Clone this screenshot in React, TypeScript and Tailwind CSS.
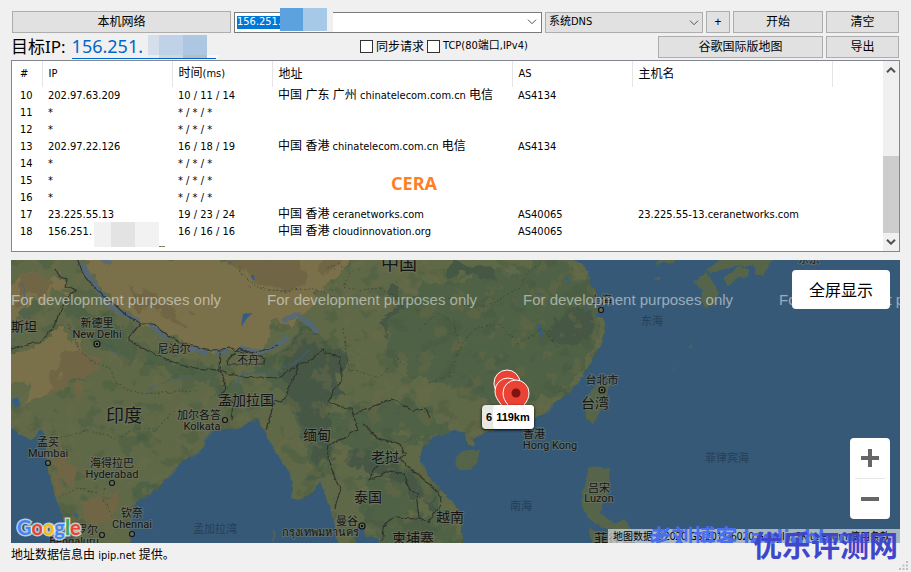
const CELL = 'border-none p-0 pl-[6px] text-left font-normal whitespace-nowrap';
const BTN = 'h-[22px] shrink-0 border border-[#adadad] bg-[#e1e1e1] text-center text-xs leading-5 hover:border-[#0078d7]';
const SMALL = "font-['DejaVu_Sans_Condensed','Noto_Sans_CJK_SC',sans-serif] text-[11px]";

type Hop = { n: number; ip: string; time: string; place?: string; host?: string; isp?: string; as?: string; name?: string };

const hops: Hop[] = [
  { n: 10, ip: '202.97.63.209', time: '10 / 11 / 14', place: '中国 广东 广州', host: 'chinatelecom.com.cn', isp: '电信', as: 'AS4134' },
  { n: 11, ip: '*', time: '* / * / *' },
  { n: 12, ip: '*', time: '* / * / *' },
  { n: 13, ip: '202.97.22.126', time: '16 / 18 / 19', place: '中国 香港', host: 'chinatelecom.com.cn', isp: '电信', as: 'AS4134' },
  { n: 14, ip: '*', time: '* / * / *' },
  { n: 15, ip: '*', time: '* / * / *' },
  { n: 16, ip: '*', time: '* / * / *' },
  { n: 17, ip: '23.225.55.13', time: '19 / 23 / 24', place: '中国 香港', host: 'ceranetworks.com', as: 'AS40065', name: '23.225.55-13.ceranetworks.com' },
  { n: 18, ip: '156.251.', time: '16 / 16 / 16', place: '中国 香港', host: 'cloudinnovation.org', as: 'AS40065' },
];

type Label = { x: number; y: number; t: string; s: number; sea?: boolean };

const labels: Label[] = [
  { x: 399, y: 270, t: '中国', s: 18 },
  { x: 24, y: 331, t: '斯坦', s: 13 },
  { x: 97, y: 327, t: '新德里', s: 11 },
  { x: 97, y: 338, t: 'New Delhi', s: 11 },
  { x: 174, y: 353, t: '尼泊尔', s: 11 },
  { x: 248, y: 364, t: '不丹', s: 11 },
  { x: 246, y: 405, t: '孟加拉国', s: 14 },
  { x: 124, y: 422, t: '印度', s: 18 },
  { x: 199, y: 419, t: '加尔各答', s: 11 },
  { x: 202, y: 430, t: 'Kolkata', s: 11 },
  { x: 48, y: 446, t: '孟买', s: 11 },
  { x: 48, y: 457, t: 'Mumbai', s: 11 },
  { x: 112, y: 467, t: '海得拉巴', s: 11 },
  { x: 112, y: 478, t: 'Hyderabad', s: 11 },
  { x: 132, y: 517, t: '钦奈', s: 11 },
  { x: 132, y: 528, t: 'Chennai', s: 11 },
  { x: 76, y: 534, t: '班加罗尔', s: 11 },
  { x: 74, y: 545, t: 'Bengaluru', s: 11 },
  { x: 317, y: 440, t: '缅甸', s: 14 },
  { x: 385, y: 462, t: '老挝', s: 14 },
  { x: 368, y: 502, t: '泰国', s: 14 },
  { x: 450, y: 522, t: '越南', s: 14 },
  { x: 413, y: 543, t: '柬埔寨', s: 14 },
  { x: 347, y: 525, t: '曼谷', s: 11 },
  { x: 320, y: 536, t: 'กรุงเทพมหานคร', s: 11 },
  { x: 534, y: 438, t: '香港', s: 11 },
  { x: 550, y: 449, t: 'Hong Kong', s: 11 },
  { x: 602, y: 384, t: '台北市', s: 11 },
  { x: 595, y: 408, t: '台湾', s: 14 },
  { x: 601, y: 304, t: '上海', s: 11 },
  { x: 599, y: 492, t: '吕宋', s: 11 },
  { x: 599, y: 502, t: 'Luzon', s: 11 },
  { x: 615, y: 544, t: '菲律宾', s: 14 },
  { x: 809, y: 263, t: '东京', s: 11 },
  { x: 652, y: 325, t: '东海', s: 11, sea: true },
  { x: 521, y: 510, t: '南海', s: 11, sea: true },
  { x: 727, y: 462, t: '菲律宾海', s: 11, sea: true },
  { x: 215, y: 533, t: '孟加拉湾', s: 11, sea: true },
];

const cities = [
  [48, 463], [112, 483], [132, 534], [102, 535], [225, 420], [601, 310],
];
const capitals = [
  [97, 344], [362, 526], [602, 390],
];

const MAINLAND =
  'M0 250H560L574 260 587 268 590 282 598 293 593 302 602 310 594 315 604 320 607 327 605 338 602 348 597 355 590 368 580 383 567 397 553 407 547 416 533 420 530 425 513 428 497 431 480 437 475 441 476 447 470 447 468 440 467 434 457 432 443 435 433 440 425 448 422 460 428 475 443 492 457 507 463 520 463 555H383L380 538 367 538 365 528 358 528 358 555H340L337 527 332 510 322 482 315 493 300 502 293 500 295 490 292 477 283 463 273 447 267 433 258 420 250 425 240 430 213 432 207 440 203 452 187 460 177 470 167 480 155 493 140 500 132 510 133 527 130 555H84L70 533 63 517 58 500 50 473 47 443 43 431 33 441 24 438 11 428 0 420Z';

const ISLANDS = [
  'M457 460L463 453 482 451 480 460 473 472 463 472 456 467Z',
  'M612 385L608 400 600 415 594 427 588 418 586 408 590 395 600 386Z',
  'M590 468L611 470 612 490 606 503 602 515 615 525 627 521 634 532 628 534 610 530 597 525 590 520 584 508 583 495 588 485Z',
  'M590 530L600 533 612 550H596Z',
  'M708 272L722 260 735 255H777L770 268 765 277 758 277 755 267 735 268 722 272 712 275Z',
  'M725 280L740 268 751 270 750 278 738 280 730 288Z',
  'M695 283L708 274 718 288 720 295 715 307 707 310 703 302 705 292 697 288Z',
  'M656 266L665 258H685L675 264Z',
  'M655 281L661 278 661 282Z',
  'M690 350L694 346 693 350ZM673 372L679 367 675 372ZM275 531L277 530 276 543H274Z',
];

const TAN = [
  'M84 255H352L340 272 322 292 304 315 283 325 270 345 253 350 213 352 193 348 177 342 160 327 143 325 117 308 103 295 90 275Z',
  'M0 360L43 345 53 333 70 333 80 352 102 362 90 378 67 388 33 398 28 404 26 380 0 382Z',
  'M0 290L20 278 37 272 63 276 68 292 33 298 13 322 0 322Z',
];

const BROWN = [
  'M228 255H300L304 285 285 292 260 287 243 275 235 270Z',
  'M64 352L80 352 102 362 90 378 67 388 40 396 55 380Z',
  'M20 280L37 272 60 277 60 287 35 294 18 305Z',
  'M58 440L66 455 70 475 64 490 70 496 62 498 57 480Z',
  'M85 498L100 495 115 490 120 500 108 525 96 530 85 520Z',
  'M120 285L150 292 175 310 190 330 165 318 135 303Z',
  'M320 255H345L335 270 322 268Z',
];

const DARK = [
  'M391 310L420 285 470 280 505 267 570 262 590 285 600 330 590 360 562 393 530 403 490 400 452 388 410 372 388 355Z',
  'M302 325L318 332 330 345 343 352 342 400 330 398 333 408 348 412 365 405 398 400 430 412 450 432 425 445 400 430 385 455 400 462 432 490 445 510 430 510 400 480 370 460 350 440 330 450 322 480 310 470 300 430 283 395 270 382 256 370 283 350Z',
  'M66 290L80 300 105 320 130 340 160 352 190 362 220 370 232 382 245 400 225 410 210 385 170 370 130 360 95 345 66 320Z',
  'M370 478L400 478 415 500 418 520 445 505 460 520 462 545H385L378 530 362 520 350 500Z',
  'M137 405L150 435 140 450 135 430Z',
  'M130 487L155 483 165 478 158 492 135 498Z',
  'M62 505L72 512 72 528 66 518Z',
];

const DEEP = [
  'M302 328L315 332 328 347 342 355 342 398 330 396 332 410 322 428 333 445 322 470 313 455 306 430 288 398 282 372 290 350Z',
  'M560 315L585 312 596 325 580 340 555 342 545 330Z',
  'M448 265L485 266 500 280 470 277 450 275Z',
  'M345 455L360 445 370 460 385 460 410 475 430 495 440 515 425 505 390 475 350 470Z',
  'M383 322L390 300 398 285 405 295 392 318 386 335Z',
];

const GLACIER =
  'M83 266L92 280 104 297 112 307 122 314 140 322M105 260L112 266M150 324L170 340M190 350L208 354M215 354L230 353M240 350L262 354 283 345 290 338M285 322L300 316 320 334';

const BORDERS =
  'M11 352L35 344 42 344 58 324 62 312 68 300 78 292 67 288 69 281 62 279 57 270M79 260L84 274 92 284 105 298 116 306 128 317 142 325 155 325 172 339 189 347 213 352 232 350 245 354 262 353 280 347M142 325L131 338 131 342 150 353 175 364 196 370 221 372 222 354M229 362L240 350 267 360 266 366 230 366ZM222 372L228 390 221 398 235 404 233 422M222 372L240 378 280 380 300 366 294 382 283 405 276 403 268 432M302 366L315 360 323 350 328 355 342 358 343 374 343 383 334 393 331 403 348 410 353 410 355 420 360 430 347 438 330 447 328 460 335 475 342 492 337 510M353 415L371 410 380 404 394 401 405 407 415 412 428 410 432 420M365 425L380 440 402 446 406 458 400 460 424 480 438 492 444 505M402 460L380 465 370 480 376 480 392 472 405 476 411 490 418 495 421 520M383 543L386 525 397 519 420 520 430 523 443 507';

const PROVINCES =
  'M240 260L242 275 262 290 285 293 312 290 340 300M328 270L340 265 352 275 345 288 360 292 382 290M382 290L410 305 450 300 480 310 495 305 520 290 530 275 545 262M345 330L350 370 380 380 400 360 410 370M462 350L475 330 500 325 520 345 545 330 560 350M420 332L440 315 455 325 462 350 450 378 430 385M70 325L80 350 92 362 110 370 118 385 140 395 200 392M62 440L90 432 120 440 137 430 160 430 175 412M100 460L108 480 105 500 115 520M60 500L80 490 100 495';

const RIVERS =
  'M13 345L25 325 28 305 24 285M105 330L112 350 122 358M238 390L242 376 275 374 300 362 311 352M241 400L248 412M150 392L175 380 200 378';

const LAKES =
  'M14 403L18 399 23 406 17 409ZM245 316L254 315 250 319 243 328ZM190 312L196 314 195 316ZM252 277L257 277 257 282ZM539 328L543 326 545 338 540 336ZM535 295L548 294 543 297ZM567 278L571 280 570 286ZM76 515L80 517 77 519ZM230 264L234 264 232 266ZM585 306L591 308 588 311Z';

function Mosaic({ className, tones }: { className: string; tones: string[] }) {
  return (
    <span aria-hidden="true" className={`absolute flex ${className}`}>
      {tones.map((tone, i) => (
        <span key={i} className={tone} />
      ))}
    </span>
  );
}

function Chevron({ className }: { className: string }) {
  return (
    <svg viewBox="0 0 10 6" className={`h-[6px] w-[10px] ${className}`} fill="none" stroke="currentColor">
      <path d="M1 .7L5 4.7 9 .7" />
    </svg>
  );
}

function Pin({ x, y }: { x: number; y: number }) {
  return (
    <g transform={`translate(${x} ${y})`}>
      <path
        d="M0 28C-1 22-4 17-8 12C-11 8-13 5-13 0A13 13 0 0 1 13 0C13 5 11 8 8 12C4 17 1 22 0 28Z"
        fill="#ea4335"
        stroke="#fff"
      />
      <circle r="4.5" fill="#811411" />
    </g>
  );
}

function Terrain() {
  return (
    <svg viewBox="11 260 889 283" preserveAspectRatio="xMinYMin slice" className="absolute inset-0 h-full w-full">
      <defs>
        <filter id="rough" x="-5%" y="-5%" width="110%" height="110%">
          <feTurbulence type="fractalNoise" baseFrequency=".12" numOctaves="3" seed="4" />
          <feDisplacementMap in="SourceGraphic" scale="7" xChannelSelector="R" yChannelSelector="G" colorInterpolationFilters="sRGB" />
        </filter>
        <filter id="ragged" x="-5%" y="-5%" width="110%" height="110%" colorInterpolationFilters="sRGB">
          <feTurbulence type="fractalNoise" baseFrequency=".06" numOctaves="4" seed="9" />
          <feDisplacementMap in="SourceGraphic" scale="30" xChannelSelector="R" yChannelSelector="G" />
        </filter>
        <filter id="patches" x="0" y="0" width="100%" height="100%" colorInterpolationFilters="sRGB">
          <feTurbulence type="fractalNoise" baseFrequency=".05 .06" numOctaves="4" seed="21" />
          <feColorMatrix values="0 0 0 0 .28  0 0 0 0 .35  0 0 0 0 .26  14 0 0 0 -8" />
        </filter>
        <filter id="spots" x="0" y="0" width="100%" height="100%" colorInterpolationFilters="sRGB">
          <feTurbulence type="fractalNoise" baseFrequency=".06" numOctaves="4" seed="33" />
          <feColorMatrix values="0 0 0 0 .42  0 0 0 0 .42  0 0 0 0 .28  0 14 0 0 -8.2" />
        </filter>
        <clipPath id="land">
          <path d={MAINLAND} />
        </clipPath>
      </defs>
      <rect x="0" y="250" width="910" height="300" fill="#355977" />
      <g filter="url(#rough)" fill="#5f6948">
        <path d={MAINLAND} />
        {ISLANDS.map((d) => (
          <path key={d} d={d} fill="#56654a" />
        ))}
      </g>
      <g clipPath="url(#land)">
        <g filter="url(#ragged)">
          {DARK.map((d) => <path key={d} d={d} fill="#4f6246" />)}
          {DEEP.map((d) => <path key={d} d={d} fill="#465845" />)}
        </g>
        <rect x="11" y="260" width="620" height="283" filter="url(#patches)" opacity=".35" />
        <rect x="11" y="260" width="620" height="283" filter="url(#spots)" opacity=".45" />
        <g filter="url(#ragged)">
          {TAN.map((d) => <path key={d} d={d} fill="#7a7049" />)}
          {BROWN.map((d) => <path key={d} d={d} fill="#706645" />)}
        </g>
      </g>
      <g fill="none" filter="url(#rough)">
        <path d={GLACIER} stroke="#52697c" strokeWidth="5" strokeOpacity=".85" />
        <path d={RIVERS} stroke="#40627c" />
        <path d={LAKES} fill="#355d84" />
        <path d={PROVINCES} stroke="#3f4637" strokeWidth=".8" strokeDasharray="2 2" />
        <path d={BORDERS} stroke="#30352f" strokeWidth="1.2" />
      </g>
      {cities.map(([x, y]) => (
        <circle key={x} cx={x} cy={y} r="2.5" fill="#666d5c" stroke="#161616" strokeWidth="1.2" />
      ))}
      {capitals.map(([x, y]) => (
        <g key={x} stroke="#101010">
          <circle cx={x} cy={y} r="3" fill="#6f745f" strokeWidth="1.2" />
          <circle cx={x} cy={y} r="1.3" fill="#101010" stroke="none" />
        </g>
      ))}
      <g textAnchor="middle" className="font-[Roboto,'Noto_Sans_CJK_SC',sans-serif] [paint-order:stroke]">
        {labels.map((l) => (
          <text
            key={l.t}
            x={l.x}
            y={l.y}
            fontSize={l.s}
            fill={l.sea ? '#263f57' : '#151515'}
            stroke={l.sea ? 'none' : '#73796a'}
            strokeOpacity=".6"
            strokeWidth="2"
          >
            {l.t}
          </text>
        ))}
      </g>
      <g fill="#fff" fillOpacity=".5" fontSize="15" className="font-['Liberation_Sans',sans-serif]">
        {[11, 267, 523, 779].map((x) => (
          <text key={x} x={x} y="305">For development purposes only</text>
        ))}
      </g>
      <Pin x={507} y={383} />
      <Pin x={508} y={391} />
      <Pin x={516} y={393} />
    </svg>
  );
}

function TraceTable() {
  return (
    <div className={`relative flex h-48 border border-[#828790] bg-white ${SMALL}`}>
      <table className="h-0 w-full table-fixed border-collapse">
        <colgroup>
          <col className="w-[30px]" />
          <col className="w-[130px]" />
          <col className="w-[100px]" />
          <col className="w-[240px]" />
          <col className="w-[120px]" />
          <col className="w-[200px]" />
          <col />
        </colgroup>
        <thead>
          <tr className="h-[26px]">
            <th className="border-r border-[#e5e5e5] p-0 pl-2 text-left font-normal">#</th>
            <th className="border-r border-[#e5e5e5] p-0 pl-[6px] text-left font-normal">IP</th>
            <th className="border-r border-[#e5e5e5] p-0 pl-[6px] text-left font-normal">
              <span className="text-xs">时间</span>(ms)
            </th>
            <th className="border-r border-[#e5e5e5] p-0 pl-[6px] text-left text-xs font-normal">地址</th>
            <th className="border-r border-[#e5e5e5] p-0 pl-[6px] text-left font-normal">AS</th>
            <th className="border-r border-[#e5e5e5] p-0 pl-[6px] text-left text-xs font-normal">主机名</th>
            <th />
          </tr>
        </thead>
        <tbody>
          {hops.map((hop) => (
            <tr key={hop.n} className="h-[17px] leading-[17px]">
              <td className="p-0 pl-2">{hop.n}</td>
              <td className={CELL}>{hop.ip}</td>
              <td className={CELL}>{hop.time}</td>
              <td className={CELL}>
                <span className="text-xs leading-[17px]">{hop.place}</span> {hop.host}{' '}
                <span className="text-xs leading-[17px]">{hop.isp}</span>
              </td>
              <td className={CELL}>{hop.as}</td>
              <td className={CELL}>{hop.name}</td>
              <td />
            </tr>
          ))}
        </tbody>
      </table>
      <div className="flex w-4 shrink-0 flex-col items-center bg-[#f0f0f0]">
        <Chevron className="my-[6px] shrink-0 rotate-180 stroke-2 text-[#505050]" />
        <div className="mt-auto h-[77px] w-full bg-[#cdcdcd]" />
        <Chevron className="my-[6px] shrink-0 stroke-2 text-[#505050]" />
      </div>
      <strong className="absolute top-[110px] left-[379px] font-['Noto_Sans',sans-serif] text-lg leading-6 text-[#ff7f27]">CERA</strong>
      <Mosaic
        className="top-[161px] left-[82px] h-[25px]"
        tones={['w-[17px] bg-[#f1f1f1]', 'w-6 bg-[#e3e3e3]', 'w-6 bg-[#f2f2f2]', 'w-[6px] border-b border-[#857c58]']}
      />
    </div>
  );
}

export default function App() {
  return (
    <div className="relative flex min-h-screen flex-col bg-[#f0f0f0] pt-[11px] pr-[11px] pl-[11px] font-['Noto_Sans','Noto_Sans_CJK_SC',sans-serif] text-black">
      <div className="flex items-center gap-[3px] pr-px pl-px">
        <button className={`${BTN} w-[219px]`}>本机网络</button>
        <div className="relative flex h-[21px] min-w-0 flex-1 items-center border border-[#7a7a7a] bg-white pr-1 pl-[2px]">
          <input
            aria-label="IP"
            defaultValue="156.251."
            className={`h-[13px] w-[46px] bg-[#0078d7] text-white outline-none ${SMALL}`}
          />
          <button aria-label="历史记录" className="ml-auto text-[#505050]">
            <Chevron className="block" />
          </button>
          <Mosaic
            className="top-[-5px] left-[45px] h-6"
            tones={['mb-px w-[23px] bg-[#5ca2de]', 'mb-px w-6 bg-[#a7c9e8]', 'w-[6px] bg-[#f0f0f0]']}
          />
        </div>
        <div className="relative w-[158px] shrink-0">
          <select aria-label="DNS" className={`block h-[21px] w-full appearance-none border border-[#adadad] bg-[#e1e1e1] pl-[3px] leading-[18px] ${SMALL}`}>
            <option>系统DNS</option>
          </select>
          <Chevron className="pointer-events-none absolute top-2 right-[4px] text-[#505050]" />
        </div>
        <button className={`${BTN} w-6`}>+</button>
        <button className={`${BTN} w-[90px]`}>开始</button>
        <button className={`${BTN} w-[73px]`}>清空</button>
      </div>

      <div className="flex h-[27px] items-center gap-[3px] pr-px">
        <div className="relative flex w-[346px] shrink-0 gap-[6px] text-[17px] leading-6">
          目标IP:
          <a href="#target" className="w-36 border-b border-[#0066cc] text-lg leading-[23px] text-[#0066cc]">156.251.</a>
          <Mosaic
            className="top-0 left-[137px] h-5"
            tones={['w-[11px] bg-[#d5dfeb]', 'w-6 bg-[#bfd2e8]', 'w-6 bg-[#adc6e2]']}
          />
          <Mosaic
            className="top-5 left-[137px] h-[3px]"
            tones={['w-[11px] bg-[#ececec]', 'w-6 bg-[#d6d6d6]', 'w-6 bg-[#bcbcbc]', 'w-3 bg-[#f8f8f8]']}
          />
        </div>
        <label className="flex shrink-0 items-center gap-[3px] text-xs">
          <input type="checkbox" className="size-[13px] appearance-none border border-[#333] bg-white" />
          同步请求
        </label>
        <label className={`flex shrink-0 items-center gap-[3px] ${SMALL}`}>
          <input type="checkbox" className="size-[13px] appearance-none border border-[#333] bg-white" />
          TCP(80端口,IPv4)
        </label>
        <button className={`${BTN} ml-auto w-[165px]`}>谷歌国际版地图</button>
        <button className={`${BTN} w-[73px]`}>导出</button>
      </div>

      <TraceTable />

      <div className="relative mt-2 min-h-[283px] flex-1 overflow-hidden">
        <Terrain />
        <div className="absolute top-[145px] left-[471px] flex h-6 w-[52px] rounded bg-white/85 pl-1 font-['Liberation_Sans',sans-serif] text-[11px] leading-6 font-bold shadow-[0_1px_3px_#000]">
          6
          <span className="ml-px w-11 rounded bg-white pl-[3px]">119km</span>
        </div>
        <button className="absolute top-[10px] right-[10px] h-[39px] w-[98px] rounded-sm bg-white text-base">全屏显示</button>
        <div className="absolute right-[10px] bottom-6 flex h-[81px] w-10 flex-col items-center rounded-sm bg-white text-[#666]">
          <button aria-label="放大" className="flex h-10 w-full items-center justify-center">
            <svg viewBox="0 0 18 18" className="size-[18px]" fill="currentColor"><path d="M7 0h4v7h7v4h-7v7H7v-7H0V7h7z" /></svg>
          </button>
          <span className="h-px w-[30px] bg-[#e6e6e6]" />
          <button aria-label="缩小" className="flex h-10 w-full items-center justify-center">
            <svg viewBox="0 0 18 18" className="size-[18px]" fill="currentColor"><path d="M0 7h18v4H0z" /></svg>
          </button>
        </div>
        <svg viewBox="0 0 72 30" className="absolute bottom-0 left-0 h-[30px] w-[72px]">
          <text
            x="6"
            y="22"
            fontSize="20"
            stroke="#fff"
            strokeOpacity=".7"
            strokeWidth="3"
            className="font-[Lato,sans-serif] font-bold [paint-order:stroke]"
          >
            <tspan fill="#4285f4">G</tspan><tspan fill="#ea4335">o</tspan><tspan fill="#fbbc05">o</tspan><tspan fill="#4285f4">g</tspan><tspan fill="#34a853">l</tspan><tspan fill="#ea4335">e</tspan>
          </text>
        </svg>
        <div className="absolute right-0 bottom-0 h-[14px] w-[292px] bg-[#f5f5f5]/60 pl-[5px] text-[10px] leading-[14px] whitespace-nowrap">
          地图数据 ©2020 GS(2011)6020 Google, SK telecom 使用条款
        </div>
        <div className="absolute right-[16px] bottom-[-5px] text-[22px] leading-6 font-bold whitespace-nowrap text-[#4a6ef0]">
          老刘博客 laoliublog.cn
        </div>
      </div>

      <footer className={`h-[29px] leading-6 ${SMALL}`}>
        <span className="text-xs leading-6">地址数据信息由</span> ipip.net <span className="text-xs leading-6">提供。</span>
      </footer>
      <div className="absolute right-[13px] bottom-[8px] text-[29px] leading-9 font-bold text-[#4046cc]">优乐评测网</div>
      <svg viewBox="0 0 9 9" className="absolute right-[3px] bottom-[2px] size-[9px]" fill="#bfbfbf">
        <path d="M7 0h2v2H7zM3.5 3.5h2v2h-2zM7 3.5h2v2H7zM0 7h2v2H0zM3.5 7h2v2h-2zM7 7h2v2H7z" />
      </svg>
    </div>
  );
}
